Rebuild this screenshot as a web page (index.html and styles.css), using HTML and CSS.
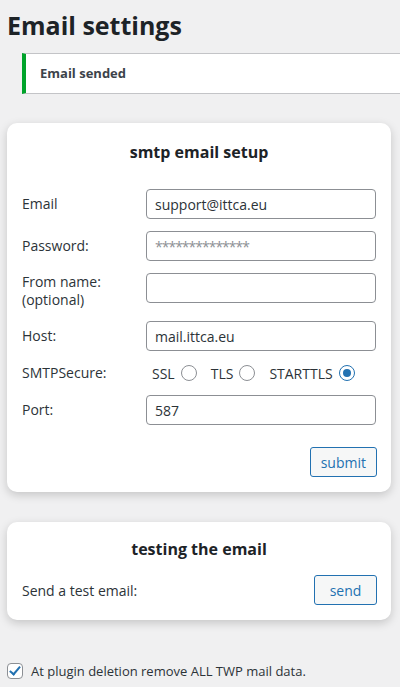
FILE: index.html
```html
<!DOCTYPE html>
<html lang="en">
<head>
<meta charset="utf-8">
<title>Email settings</title>
<link rel="stylesheet" href="styles.css">
</head>
<body>
<div class="wrap">
  <h1 class="page-title">Email settings</h1>
  <div class="notice"><p class="notice-text">Email sended</p></div>

  <section class="card card-setup">
    <h2 class="card-title">smtp email setup</h2>
    <form class="form">
      <div class="row">
        <label class="label">Email</label>
        <input class="field" type="text" value="support@ittca.eu">
      </div>
      <div class="row">
        <label class="label">Password:</label>
        <input class="field" type="password" placeholder="**************">
      </div>
      <div class="row row-top">
        <label class="label">From name:<br>(optional)</label>
        <input class="field" type="text">
      </div>
      <div class="row">
        <label class="label">Host:</label>
        <input class="field" type="text" value="mail.ittca.eu">
      </div>
      <div class="row row-radios">
        <span class="label">SMTPSecure:</span>
        <div class="radios">
          <label class="radio-opt">SSL <input class="radio" type="radio" name="secure"></label>
          <label class="radio-opt">TLS <input class="radio" type="radio" name="secure"></label>
          <label class="radio-opt">STARTTLS <input class="radio" type="radio" name="secure" checked></label>
        </div>
      </div>
      <div class="row">
        <label class="label">Port:</label>
        <input class="field" type="text" value="587">
      </div>
      <div class="actions">
        <button class="btn" type="button">submit</button>
      </div>
    </form>
  </section>

  <section class="card card-test">
    <h2 class="card-title card-title-test">testing the email</h2>
    <div class="send-row">
      <span class="send-label">Send a test email:</span>
      <button class="btn" type="button">send</button>
    </div>
  </section>

  <label class="cleanup">
    <input class="check" type="checkbox" checked>
    <span class="cleanup-text">At plugin deletion remove ALL TWP mail data.</span>
  </label>
</div>
</body>
</html>
```

FILE: styles.css
```css
html, body {
  margin: 0;
  padding: 0;
  background: #f0f0f1;
}
body {
  font-family: "Open Sans", "Noto Sans", sans-serif;
  color: #1d2327;
  font-size: 14px;
}
.wrap {
  padding: 0 9px 0 7px;
}
.page-title {
  margin: 8px 0 11px 0;
  font-size: 25px;
  line-height: 34px;
  font-weight: 700;
  color: #1d2327;
}
.notice {
  margin: 0 -9px 0 15px;
  background: #fff;
  border: 1px solid #c3c4c7;
  border-left: 4px solid #00a32a;
  border-right: none;
  padding: 0 14px;
}
.notice-text {
  margin: 0;
  padding: 10px 0;
  font-size: 13px;
  line-height: 19px;
  font-weight: 700;
  color: #3c434a;
}
.card {
  background: #fff;
  border-radius: 10px;
  box-shadow: 0 3px 10px rgba(0, 0, 0, 0.18);
  padding: 18px 15px 15px;
  margin-top: 29px;
}
.card-test {
  margin-top: 30px;
  padding-top: 16px;
}
.card-title {
  margin: 0 0 26px;
  text-align: center;
  font-size: 16px;
  line-height: 22px;
  font-weight: 700;
  color: #1d2327;
}
.card-title-test {
  margin-bottom: 15px;
}
.form {
  display: flex;
  flex-direction: column;
  gap: 12px;
}
.row {
  display: flex;
  align-items: center;
}
.row-top {
  align-items: flex-start;
}
.row-radios {
  height: 20px;
}
.label {
  width: 124px;
  flex: none;
  line-height: 18px;
  color: #2c3338;
}
.field {
  flex: 1;
  min-width: 0;
  box-sizing: border-box;
  height: 30px;
  margin: 0;
  padding: 0 8px;
  border: 1px solid #8c8f94;
  border-radius: 4px;
  background: #fff;
  font-family: inherit;
  font-size: 14px;
  color: #2c3338;
  outline: none;
}
.field::placeholder {
  color: #8c8f94;
  letter-spacing: -1px;
}
.radios {
  display: flex;
  align-items: center;
  padding-left: 6px;
}
.radio-opt {
  display: flex;
  align-items: center;
  gap: 6px;
  margin-right: 14px;
  color: #2c3338;
}
.radio {
  appearance: none;
  -webkit-appearance: none;
  margin: 0;
  width: 16px;
  height: 16px;
  box-sizing: border-box;
  border: 1px solid #8c8f94;
  border-radius: 50%;
  background: #fff;
  position: relative;
}
.radio:checked {
  border-color: #2271b1;
}
.radio:checked::after {
  content: "";
  position: absolute;
  left: 3px;
  top: 3px;
  width: 8px;
  height: 8px;
  border-radius: 50%;
  background: #2271b1;
}
.actions {
  display: flex;
  justify-content: flex-end;
  margin-top: 10px;
  margin-right: -1px;
}
.btn {
  box-sizing: border-box;
  min-width: 63px;
  height: 30px;
  padding: 0 10px;
  border: 1px solid #2271b1;
  border-radius: 3px;
  background: #f6f7f7;
  color: #2271b1;
  font-family: inherit;
  font-size: 14px;
  cursor: pointer;
}
.send-row {
  display: flex;
  align-items: center;
  justify-content: space-between;
  margin-right: -1px;
}
.send-label {
  color: #2c3338;
}
.cleanup {
  display: flex;
  align-items: center;
  gap: 8px;
  margin-top: 41px;
  line-height: 20px;
  font-size: 13px;
  color: #2c3338;
}
.check {
  appearance: none;
  -webkit-appearance: none;
  margin: 0;
  width: 16px;
  height: 16px;
  box-sizing: border-box;
  border: 1px solid #8c8f94;
  border-radius: 4px;
  background: #fff;
  position: relative;
}
.check:checked::after {
  content: "";
  position: absolute;
  left: 4px;
  top: 0px;
  width: 4px;
  height: 9px;
  border: solid #2271b1;
  border-width: 0 2px 2px 0;
  transform: rotate(40deg);
}
```
